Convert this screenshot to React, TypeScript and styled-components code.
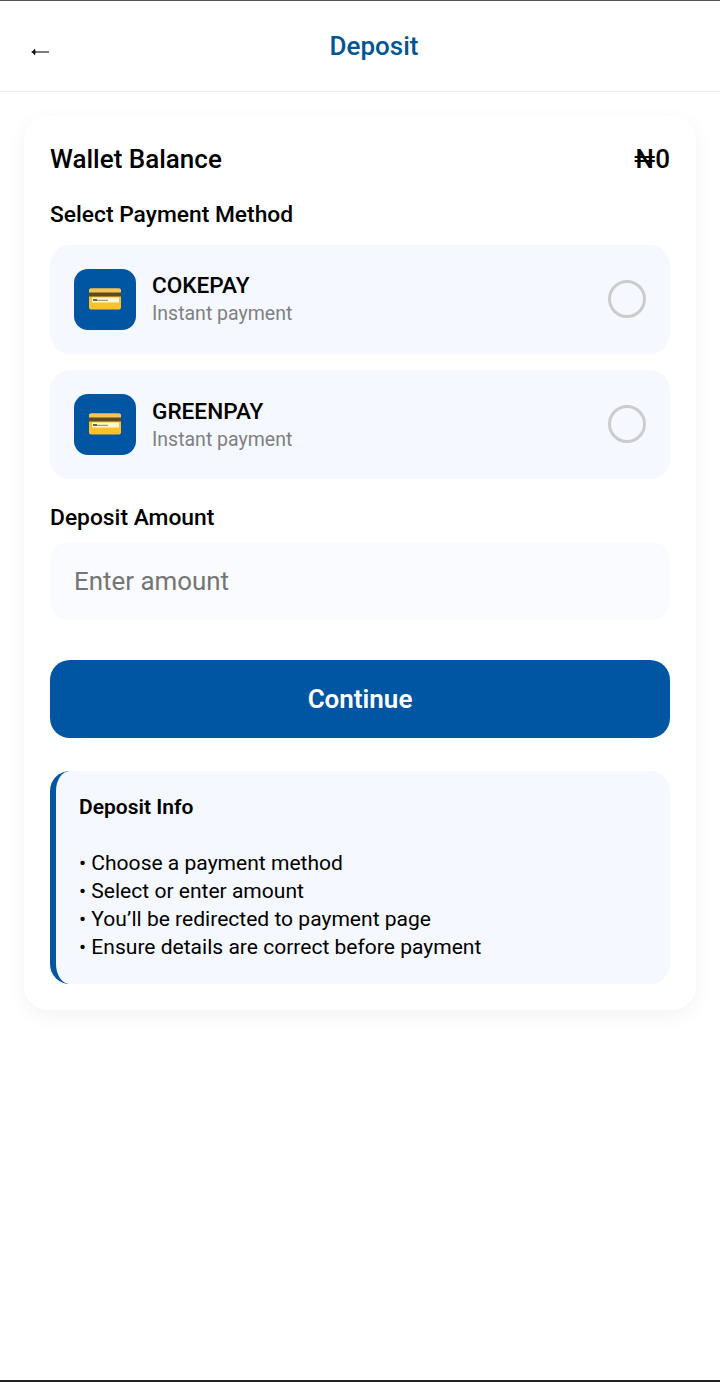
import React from "react";
import styled, { createGlobalStyle } from "styled-components";

const GlobalStyle = createGlobalStyle`
  html, body {
    margin: 0;
    padding: 0;
    background: #fff;
    font-family: Roboto, "Liberation Sans", sans-serif;
  }
  * {
    box-sizing: border-box;
  }
`;

const methods = [
  { name: "COKEPAY", note: "Instant payment" },
  { name: "GREENPAY", note: "Instant payment" },
];

const tips = [
  "Choose a payment method",
  "Select or enter amount",
  "You’ll be redirected to payment page",
  "Ensure details are correct before payment",
];

const BackArrow = () => (
  <svg width="20" height="14" viewBox="0 0 20 14">
    <path d="M4 7H19" stroke="#444" strokeWidth="1.4" fill="none" />
    <path d="M1 7C2.6 6.2 4 4.8 5 3.4L5.6 7L5 10.6C4 9.2 2.6 7.8 1 7Z" fill="#111" />
  </svg>
);

const CardIcon = () => (
  <svg width="34" height="24" viewBox="0 0 34 24">
    <rect x="1" y="0.5" width="32" height="21" rx="2" fill="#fcc227" />
    <path d="M1 2.5a2 2 0 0 1 2-2h28a2 2 0 0 1 2 2V4.5H1Z" fill="#f3c45a" />
    <rect x="1" y="4.5" width="32" height="4" fill="#5f4a20" />
    <rect x="4" y="9.5" width="27" height="5" fill="#fff8d8" />
    <rect x="5" y="11" width="4" height="2" fill="#6d6550" />
    <rect x="9" y="11.8" width="11" height="1" fill="#8d8468" />
  </svg>
);

const App: React.FC = () => {
  return (
    <Page>
      <GlobalStyle />
      <Header>
        <BackButton>
          <BackArrow />
        </BackButton>
        <Title>Deposit</Title>
      </Header>
      <Content>
        <Card>
          <BalanceRow>
            <span>Wallet Balance</span>
            <span>₦0</span>
          </BalanceRow>
          <SectionLabel>Select Payment Method</SectionLabel>
          <MethodList>
            {methods.map((m) => (
              <Method key={m.name}>
                <IconBox>
                  <CardIcon />
                </IconBox>
                <MethodText>
                  <MethodName>{m.name}</MethodName>
                  <MethodNote>{m.note}</MethodNote>
                </MethodText>
                <Radio />
              </Method>
            ))}
          </MethodList>
          <AmountLabel>Deposit Amount</AmountLabel>
          <AmountInput placeholder="Enter amount" />
          <ContinueButton>Continue</ContinueButton>
          <InfoBox>
            <InfoTitle>Deposit Info</InfoTitle>
            <InfoList>
              {tips.map((t) => (
                <div key={t}>• {t}</div>
              ))}
            </InfoList>
          </InfoBox>
        </Card>
      </Content>
    </Page>
  );
};

export default App;

const Page = styled.div`
  height: 1382px;
  display: flex;
  flex-direction: column;
  background: #fff;
  border-top: 1px solid #555;
  border-bottom: 2px solid #222;
  overflow: hidden;
`;

const Header = styled.header`
  height: 91px;
  flex: none;
  display: flex;
  align-items: center;
  padding: 0 24px;
  border-bottom: 1px solid #eaeaea;
`;

const BackButton = styled.div`
  width: 28px;
  display: flex;
  padding: 11px 0 0 6px;
`;

const Title = styled.h1`
  flex: 1;
  margin: 0;
  text-align: center;
  font-size: 26px;
  line-height: 30px;
  font-weight: 500;
  color: #005596;
`;

const Content = styled.main`
  padding: 24px 24px 0;
`;

const Card = styled.section`
  background: #fff;
  border-radius: 24px;
  padding: 26px 26px 26px;
  box-shadow: 0 6px 20px rgba(0, 0, 0, 0.05);
`;

const BalanceRow = styled.div`
  display: flex;
  justify-content: space-between;
  font-size: 26px;
  line-height: 34px;
  font-weight: 500;
  color: #000;
`;

const SectionLabel = styled.div`
  margin-top: 25px;
  font-size: 22.8px;
  line-height: 28px;
  font-weight: 500;
  color: #000;
`;

const MethodList = styled.div`
  margin-top: 16px;
  display: flex;
  flex-direction: column;
  gap: 16.4px;
`;

const Method = styled.div`
  height: 109px;
  display: flex;
  align-items: center;
  padding: 0 24px;
  border-radius: 20px;
  background: #f5f8fe;
`;

const IconBox = styled.div`
  width: 62px;
  height: 61px;
  flex: none;
  display: flex;
  align-items: center;
  justify-content: center;
  border-radius: 14px;
  background: #0056a3;
`;

const MethodText = styled.div`
  flex: 1;
  margin: 0.8px 0 0 16px;
`;

const MethodName = styled.div`
  padding-top: 1px;
  font-size: 22.6px;
  line-height: 28px;
  font-weight: 500;
  color: #000;
`;

const MethodNote = styled.div`
  font-size: 19.5px;
  line-height: 28px;
  color: #808080;
`;

const Radio = styled.div`
  width: 38px;
  height: 38px;
  flex: none;
  margin-top: -1px;
  border-radius: 50%;
  border: 3px solid #cccccc;
`;

const AmountLabel = styled(SectionLabel)`
  margin-top: 24.6px;
`;

const AmountInput = styled.input`
  display: block;
  width: 100%;
  height: 78px;
  margin-top: 10px;
  padding: 0 24px;
  border: 0;
  border-radius: 18px;
  background: #f9fbff;
  font-family: inherit;
  font-size: 25.9px;
  outline: none;

  &::placeholder {
    color: #757575;
    opacity: 1;
  }
`;

const ContinueButton = styled.button`
  display: block;
  width: 100%;
  height: 78px;
  margin-top: 40px;
  border: 0;
  border-radius: 20px;
  background: #0056a3;
  color: #fff;
  font-family: inherit;
  font-size: 26px;
  font-weight: 600;
`;

const InfoBox = styled.div`
  margin-top: 33px;
  height: 213px;
  padding: 22px 24px 0 23px;
  border-left: 6px solid #0056a3;
  border-radius: 20px;
  background: #f5f8fe;
`;

const InfoTitle = styled.div`
  font-size: 21px;
  line-height: 28px;
  font-weight: 600;
  color: #000;
`;

const InfoList = styled.div`
  margin-top: 28px;
  font-size: 21.05px;
  line-height: 28px;
  color: #000;
`;
